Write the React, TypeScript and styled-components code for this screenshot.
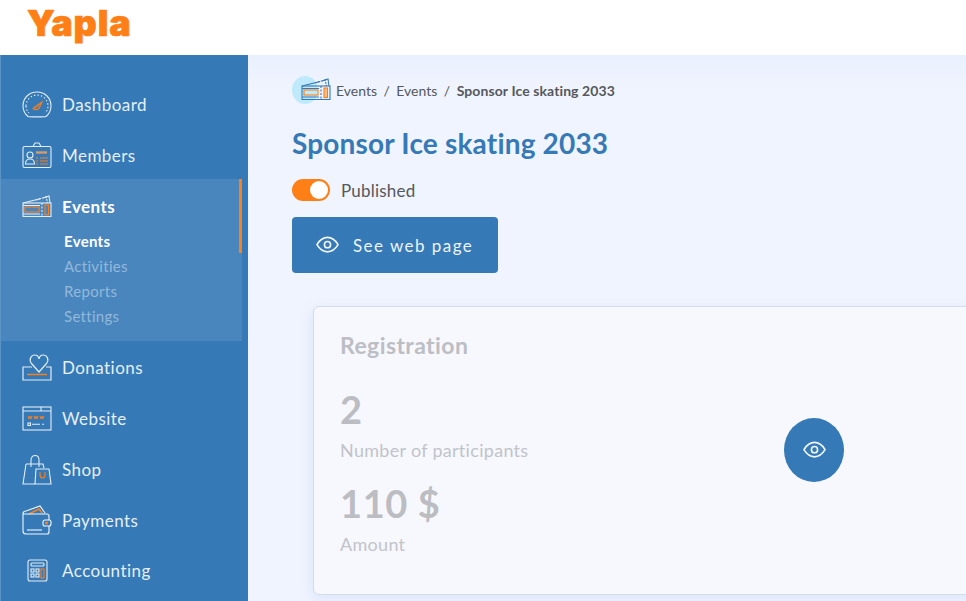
import React from "react";
import styled, { createGlobalStyle } from "styled-components";

const GlobalStyle = createGlobalStyle`
  html, body {
    margin: 0;
    padding: 0;
    height: 100%;
    overflow: hidden;
    background: #f0f4fe;
    font-family: "Lato", "Open Sans", sans-serif;
  }
  * { box-sizing: border-box; }
`;

const ORANGE = "#ff7f17";
const BLUE = "#3579b6";
const LINE = "#e3edf6";

const Page = styled.div`
  width: 966px;
  height: 601px;
  display: flex;
  flex-direction: column;
  overflow: hidden;
`;

const Header = styled.header`
  height: 55px;
  flex: none;
  background: #fff;
  padding-left: 27px;
`;

const Logo = styled.div`
  font-family: "Inter", sans-serif;
  font-weight: 900;
  font-size: 36px;
  line-height: 46px;
  letter-spacing: 0.9px;
  -webkit-text-stroke: 0.7px ${ORANGE};
  color: ${ORANGE};
`;

const Body = styled.div`
  flex: 1;
  display: flex;
  min-height: 0;
`;

const Sidebar = styled.nav`
  width: 248px;
  flex: none;
  background: ${BLUE};
  border-left: 1px solid #5d94c6;
  padding-top: 24px;
  overflow: hidden;
`;

const Item = styled.div`
  height: 50.75px;
  display: flex;
  align-items: center;
  gap: 10px;
  padding-left: 21px;
  color: #e6eff8;
  font-size: 17px;
  letter-spacing: 0.45px;
`;

const IconSlot = styled.span`
  width: 30px;
  height: 30px;
  flex: none;
  display: flex;
  align-items: center;
  justify-content: center;
`;

const ActiveGroup = styled.div`
  width: 241px;
  height: 162px;
  margin: -1.5px 0 1.5px;
  padding-top: 2px;
  background: #4986be;
  position: relative;
`;

const ActiveBar = styled.span`
  position: absolute;
  top: 0;
  right: 0;
  width: 3px;
  height: 74px;
  background: ${ORANGE};
`;

const ActiveItem = styled(Item)`
  color: #fff;
  font-weight: 700;
`;

const SubList = styled.div`
  display: flex;
  flex-direction: column;
  padding-left: 63px;
  margin-top: -3px;
`;

const SubLink = styled.div<{ $active?: boolean }>`
  height: 25px;
  line-height: 25px;
  font-size: 15px;
  letter-spacing: 0.3px;
  font-weight: ${(p) => (p.$active ? 700 : 400)};
  color: ${(p) => (p.$active ? "#fff" : "#93b8da")};
`;

const Main = styled.main`
  flex: 1;
  min-width: 0;
  padding: 20px 0 0 44px;
  background: linear-gradient(#e9f0fd, #f0f4fe 36px);
  display: flex;
  flex-direction: column;
`;

const Crumbs = styled.div`
  display: flex;
  align-items: center;
  height: 30px;
  font-size: 14px;
  color: #55585c;
`;

const CrumbBubble = styled.span`
  width: 44px;
  height: 30px;
  flex: none;
  position: relative;
  display: block;
  &::before {
    content: "";
    position: absolute;
    left: 0;
    top: 1px;
    width: 26px;
    height: 28px;
    border-radius: 50%;
    background: #bfeafb;
  }
  svg { position: absolute; left: 9px; top: 3px; }
`;

const Sep = styled.span`
  margin: 0 6.5px;
`;

const CrumbCurrent = styled.b`
  letter-spacing: 0.1px;
`;

const Title = styled.h1`
  margin: 20px 0 0;
  font-size: 28px;
  line-height: 36px;
  font-weight: 700;
  letter-spacing: 0.18px;
  color: ${BLUE};
`;

const ToggleRow = styled.div`
  display: flex;
  align-items: center;
  gap: 11px;
  margin-top: 17px;
  height: 24px;
  font-size: 17px;
  letter-spacing: 0.2px;
  color: #55585c;
`;

const Toggle = styled.span`
  width: 38px;
  height: 22px;
  border-radius: 11px;
  background: ${ORANGE};
  position: relative;
  &::after {
    content: "";
    position: absolute;
    right: 2px;
    top: 2px;
    width: 18px;
    height: 18px;
    border-radius: 50%;
    background: #fff;
  }
`;

const WebButton = styled.button`
  margin-top: 15px;
  width: 206px;
  height: 56px;
  flex: none;
  border: 0;
  border-radius: 4px;
  background: ${BLUE};
  color: #eef4fa;
  font: 400 17px "Lato", sans-serif;
  letter-spacing: 1.45px;
  display: flex;
  align-items: center;
  gap: 14px;
  padding: 0 0 0 24px;
`;

const Card = styled.section`
  margin: 33px 0 0 21px;
  height: 289px;
  flex: none;
  width: 700px;
  background: #f7f8fe;
  border: 1px solid #d3ddef;
  border-radius: 6px;
  box-shadow: -2px 4px 14px rgba(60, 110, 220, 0.1);
  padding: 22px 26px;
  position: relative;
`;

const CardTitle = styled.h2`
  margin: 0;
  font-size: 23px;
  line-height: 32px;
  font-weight: 700;
  letter-spacing: 0.4px;
  color: #bcbec4;
`;

const StatValue = styled.div<{ $first?: boolean }>`
  margin-top: ${(p) => (p.$first ? "25px" : "19px")};
  font-size: 38px;
  line-height: 46px;
  font-weight: 700;
  letter-spacing: 0.6px;
  color: #bcbdc2;
`;

const StatLabel = styled.div`
  margin-top: 7px;
  font-size: 18px;
  line-height: 22px;
  letter-spacing: 0.3px;
  color: #c1c3c9;
`;

const RoundButton = styled.button`
  position: absolute;
  left: 470px;
  top: 111px;
  width: 60px;
  height: 64px;
  border: 0;
  border-radius: 50%;
  background: ${BLUE};
  display: flex;
  align-items: center;
  justify-content: center;
`;

const EyeIcon = ({ size }: { size: number }) => (
  <svg width={size} height={size * 0.75} viewBox="0 0 24 18" fill="none" stroke="#f2f6fb" strokeWidth="1.7">
    <path d="M1 9C4 4 8 1.5 12 1.5S20 4 23 9c-3 5-7 7.5-11 7.5S4 14 1 9Z" />
    <circle cx="12" cy="9" r="3.2" />
  </svg>
);

const Gauge = () => (
  <svg width="30" height="27" viewBox="0 0 30 27" fill="none" stroke={LINE} strokeWidth="1.1">
    <path d="M6 25.500C2.500 22.500 1 19 1 15 1 7 7 1 15 1s14 6 14 14c0 4-1.500 7.500-5 10.500-1 .5-17 .5-18 0Z" />
    <path d="M4 15c0-6 5-11 11-11s11 5 11 11c0 3-1 5-3 7M4 15c0 3 1 5 3 7" strokeDasharray="1.500 2" />
    <path d="M11 17.500l9-6.500-3 6.500c-1 1.500-5 1.500-6 0Z" stroke={ORANGE} fill={ORANGE} fillOpacity="0.35" />
  </svg>
);

const Badge = () => (
  <svg width="30" height="26" viewBox="0 0 30 26" fill="none" stroke={LINE} strokeWidth="1.1">
    <rect x="1" y="4.500" width="28" height="21" rx="1.500" />
    <path d="M11 4.500l2-3.500h4l2 3.500" />
    <circle cx="8" cy="13" r="3" />
    <path d="M3.500 22c0-3.500 2-5 4.500-5s4.500 1.500 4.500 5Z" />
    <path d="M14 10.500h11" stroke="#d59a6e" strokeWidth="2.400" />
    <path d="M14 16h2M18 16h8M14 19h2M18 19h8M14 22h2M18 22h8" stroke={ORANGE} />
  </svg>
);

const Ticket = ({ stroke = LINE, stub = "none" }: { stroke?: string; stub?: string }) => (
  <svg width="30" height="22" viewBox="0 0 30 22" fill="none" stroke={stroke} strokeWidth="1.1">
    <path d="M1 8L19 3.500M21 3l6-2 1 7" />
    <path d="M14 5l10-3M24 1l1.500 7" strokeDasharray="2 1" />
    <rect x="1" y="8" width="28" height="13.500" />
    <path d="M20 8v13.500" strokeDasharray="2 1.500" />
    <path d="M1 10.500h17M1 19h17" />
    <rect x="3" y="12" width="14" height="5" stroke={ORANGE} />
    <rect x="23" y="10" width="3.500" height="9.500" stroke={ORANGE} fill={stub} />
  </svg>
);

const Donation = () => (
  <svg width="30" height="27" viewBox="0 0 30 27" fill="none" stroke={LINE} strokeWidth="1.2">
    <path d="M17 18L9.500 9.500C6.500 5.500 9 1 13 1c2 0 3.500 1.500 4 4 .5-2.500 2-4 4-4 4 0 6.500 4.500 3.500 8.500Z" />
    <path d="M10 13H1v13h28V13h-5" />
    <path d="M5 20.500h20" stroke={ORANGE} strokeWidth="1.500" />
  </svg>
);

const Web = () => (
  <svg width="30" height="25" viewBox="0 0 30 25" fill="none" stroke={LINE} strokeWidth="1.1">
    <rect x="1" y="1" width="28" height="23" />
    <path d="M1 5h28M19 1v4" />
    <path d="M6 10l1 3 1-3 1 3 1-3M12 10l1 3 1-3 1 3 1-3M18 10l1 3 1-3 1 3 1-3" stroke={ORANGE} strokeWidth="0.900" />
    <rect x="6" y="17" width="2.500" height="2.500" />
    <path d="M10 18.250h8M20 18.250h2" />
  </svg>
);

const Bags = () => (
  <svg width="30" height="31" viewBox="0 0 30 31" fill="none" stroke={LINE} strokeWidth="1.1">
    <path d="M4 10h17l1 4M4 10L1 30h12" />
    <path d="M9 13V6c0-6 8-6 8 0v7" />
    <path d="M14 15h13l2 15H13Z" />
    <path d="M18 18v3c0 4 5 4 5 0v-3" stroke={ORANGE} />
  </svg>
);

const Wallet = () => (
  <svg width="30" height="30" viewBox="0 0 30 30" fill="none" stroke="#f2f6fb" strokeWidth="1.1">
    <path d="M1 9c0-2 1-3 3-3L18 1l5 7" />
    <path d="M7 9l10-5 3 4" stroke={ORANGE} strokeWidth="1.400" />
    <path d="M1 9h24c1.500 0 2 1 2 2v4M1 9v17c0 1.500 1 3 3 3h21c1.500 0 2-1 2-2v-6" />
    <rect x="21" y="15" width="8" height="6" rx="2" />
    <circle cx="24.500" cy="18" r="1" stroke={ORANGE} fill={ORANGE} />
    <path d="M5 25h15" />
  </svg>
);

const Calculator = () => (
  <svg width="21" height="23" viewBox="0 0 21 23" fill="none" stroke={LINE} strokeWidth="1.1">
    <rect x="1" y="1" width="19" height="21" rx="2" />
    <rect x="4" y="4" width="13" height="3" rx="1" />
    <rect x="4" y="10" width="3" height="3" />
    <rect x="9" y="10" width="3" height="3" />
    <rect x="4" y="15" width="3" height="3" />
    <rect x="9" y="15" width="3" height="3" />
    <rect x="14" y="10" width="3" height="9" stroke={ORANGE} />
  </svg>
);

const menuBefore = [
  { label: "Dashboard", icon: <Gauge /> },
  { label: "Members", icon: <Badge /> },
];

const menuAfter = [
  { label: "Donations", icon: <Donation /> },
  { label: "Website", icon: <Web /> },
  { label: "Shop", icon: <Bags /> },
  { label: "Payments", icon: <Wallet /> },
  { label: "Accounting", icon: <Calculator /> },
];

const subLinks = ["Events", "Activities", "Reports", "Settings"];

export default function App() {
  return (
    <Page>
      <GlobalStyle />
      <Header>
        <Logo>Yapla</Logo>
      </Header>
      <Body>
        <Sidebar>
          {menuBefore.map((m) => (
            <Item key={m.label}>
              <IconSlot>{m.icon}</IconSlot>
              {m.label}
            </Item>
          ))}
          <ActiveGroup>
            <ActiveBar />
            <ActiveItem>
              <IconSlot>
                <Ticket />
              </IconSlot>
              Events
            </ActiveItem>
            <SubList>
              {subLinks.map((s, i) => (
                <SubLink key={s} $active={i === 0}>
                  {s}
                </SubLink>
              ))}
            </SubList>
          </ActiveGroup>
          {menuAfter.map((m) => (
            <Item key={m.label}>
              <IconSlot>{m.icon}</IconSlot>
              {m.label}
            </Item>
          ))}
        </Sidebar>
        <Main>
          <Crumbs>
            <CrumbBubble>
              <Ticket stroke={BLUE} stub="#f9c089" />
            </CrumbBubble>
            Events
            <Sep>/</Sep>
            Events
            <Sep>/</Sep>
            <CrumbCurrent>Sponsor Ice skating 2033</CrumbCurrent>
          </Crumbs>
          <Title>Sponsor Ice skating 2033</Title>
          <ToggleRow>
            <Toggle />
            Published
          </ToggleRow>
          <WebButton>
            <EyeIcon size={23} />
            See web page
          </WebButton>
          <Card>
            <CardTitle>Registration</CardTitle>
            <StatValue $first>2</StatValue>
            <StatLabel>Number of participants</StatLabel>
            <StatValue>110 $</StatValue>
            <StatLabel>Amount</StatLabel>
            <RoundButton aria-label="View">
              <EyeIcon size={23} />
            </RoundButton>
          </Card>
        </Main>
      </Body>
    </Page>
  );
}
